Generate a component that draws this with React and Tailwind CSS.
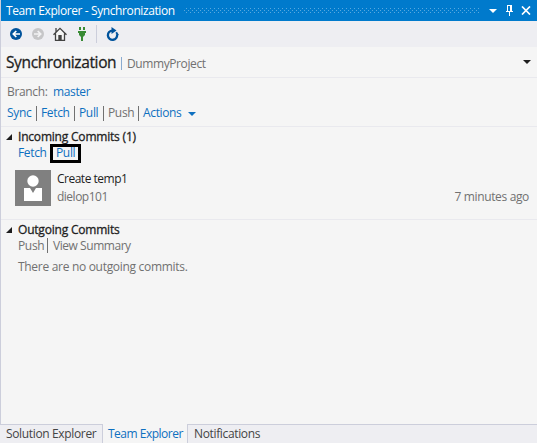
import React from "react";

const Sep = ({ className = "" }) => <span className={`h-[15px] w-px shrink-0 bg-[#717171] ${className}`} />;

const Label = ({ className = "", children }) => (
  <span className={`shrink-0 whitespace-nowrap ${className}`}>{children}</span>
);

const Expander = () => (
  <svg width="6" height="6" viewBox="0 0 6 6" className="ml-[5px] mr-[6px] shrink-0">
    <path d="M6 0V6H0Z" fill="#1e1e1e" />
  </svg>
);

function TitleBar() {
  return (
    <div className="flex h-[21px] items-center bg-[#007acc] pl-[5px] text-white">
      <Label className="w-[172px] tracking-[-0.4px]">Team Explorer - Synchronization</Label>
      <svg width="301" height="5" className="shrink-0">
        <defs>
          <pattern id="grip" width="4" height="4" patternUnits="userSpaceOnUse">
            <path d="M0 0h1v1H0zM2 2h1v1H2z" fill="#59a8de" />
          </pattern>
        </defs>
        <rect x="5" width="296" height="5" fill="url(#grip)" />
      </svg>
      <svg width="8" height="4" viewBox="0 0 8 4" className="ml-[10px] shrink-0">
        <path d="M0 0H8L4 4Z" fill="#fff" />
      </svg>
      <svg width="7" height="11" viewBox="0 0 7 11" className="ml-[9px] shrink-0">
        <path d="M1 0H6V6H7V7H4V11H3V7H0V6H1ZM2 1V6H4V1Z" fill="#fff" fillRule="evenodd" />
      </svg>
      <svg width="10" height="9" viewBox="0 0 10 9" className="ml-[8px] shrink-0">
        <path d="M1 .5L9 8.5M9 .5L1 8.5" stroke="#fff" strokeWidth="1.7" />
      </svg>
    </div>
  );
}

function Toolbar() {
  return (
    <div className="flex h-[26px] items-center bg-[#eeeef2] pl-[9px]">
      <svg width="12" height="12" viewBox="0 0 12 12" className="shrink-0">
        <circle cx="6" cy="6" r="6" fill="#00539c" />
        <path d="M10 6H3.5M6.3 3L3.3 6L6.3 9" fill="none" stroke="#fff" strokeWidth="1.7" />
      </svg>
      <svg width="12" height="12" viewBox="0 0 12 12" className="ml-[10px] shrink-0">
        <circle cx="6" cy="6" r="6" fill="#c6c6c8" />
        <path d="M2 6H8.5M5.7 3L8.7 6L5.7 9" fill="none" stroke="#f2f2f4" strokeWidth="1.7" />
      </svg>
      <svg width="14" height="14" viewBox="0 0 14 14" className="ml-[9px] shrink-0">
        <path d="M2.5 6.5V13.4H11.5V6.5L7 2Z" fill="#f5f5f5" />
        <path d="M.5 7.8L7 1.3L13.5 7.8M2.5 6.5V13.4H11.5V6.5M3 5V1" fill="none" stroke="#424242" strokeWidth="1.3" />
        <path d="M5.3 8H8.7V14H5.3Z" fill="#424242" />
      </svg>
      <svg width="8" height="14" viewBox="0 0 8 14" className="ml-[11px] shrink-0">
        <path d="M1 0H3V3H1ZM5 0H7V3H5ZM0 4H8V6H7V8L5 10V14H3V10L1 8V6H0Z" fill="#388a34" />
      </svg>
      <span className="ml-[10px] h-[18px] w-px bg-[#ccceDB]" />
      <svg width="14" height="14" viewBox="0 0 14 14" className="ml-[9px] shrink-0">
        <path d="M6.5 3.6A4.6 4.6 0 1 0 11 7.2" fill="none" stroke="#00539c" strokeWidth="2.3" />
        <path d="M10.2 5.2L12 8.2" fill="none" stroke="#00539c" strokeWidth="1.8" />
        <path d="M5.5 0L10.5 3.5L5.5 7Z" fill="#00539c" />
      </svg>
    </div>
  );
}

function Header() {
  return (
    <div className="flex h-[31px] items-center border-b border-[#e9e9ee] pl-[5px] text-[#717171]">
      <Label className="w-[115px] text-[15.5px] tracking-[-0.38px] text-[#1e1e1e] [-webkit-text-stroke:0.3px]">
        Synchronization
      </Label>
      <span className="mt-[2px] h-[13px] w-px bg-[#8aabd0]" />
      <Label className="ml-[5px] pt-[3px] tracking-[-0.4px]">DummyProject</Label>
      <svg width="8" height="4" viewBox="0 0 8 4" className="mb-px ml-auto mr-[6px]">
        <path d="M0 0H8L4 4Z" fill="#1e1e1e" />
      </svg>
    </div>
  );
}

function Incoming() {
  return (
    <section className="h-[93px] border-b border-[#e9e9ee]">
      <div className="flex h-[17px] items-center pt-[3px]">
        <Expander />
        <Label className="tracking-[-0.2px] text-[#1e1e1e] [-webkit-text-stroke:0.3px]">Incoming Commits (1)</Label>
      </div>
      <div className="flex h-[19px] items-center pl-[17px] text-[#0e70c0]">
        <Label className="w-[32px] pb-px">Fetch</Label>
        <span className="flex h-[19px] w-[31px] items-center border-[3px] border-black pb-px pl-[3px]">Pull</span>
      </div>
      <div className="mt-[7px] flex pl-[14px]">
        <svg width="36" height="36" viewBox="0 0 36 36" className="shrink-0">
          <path d="M0 0H36V36H0Z" fill="#808080" />
          <path d="M9 18H15L18 23L21 18H27V31H9Z" fill="#fff" />
          <circle cx="18" cy="11" r="5.7" fill="#fff" />
        </svg>
        <div className="ml-[6px] flex flex-1 flex-col text-[#717171]">
          <span className="h-[18px] leading-[18px] tracking-[-0.5px] text-[#1e1e1e]">Create temp1</span>
          <div className="flex h-[18px] justify-between pr-[8px] leading-[18px]">
            <span className="tracking-[-0.5px]">dielop101</span>
            <span>7 minutes ago</span>
          </div>
        </div>
      </div>
    </section>
  );
}

function Outgoing() {
  return (
    <section className="flex-1 text-[#717171]">
      <div className="flex h-[17px] items-center pt-[3px]">
        <Expander />
        <Label className="tracking-[-0.2px] text-[#1e1e1e] [-webkit-text-stroke:0.3px]">Outgoing Commits</Label>
      </div>
      <div className="flex h-[17px] items-center pl-[17px]">
        <Label className="w-[29px]">Push</Label>
        <Sep />
        <Label className="ml-[5px] tracking-[-0.45px]">View Summary</Label>
      </div>
      <div className="flex h-[26px] items-center pl-[17px]">
        <Label className="tracking-[-0.3px]">There are no outgoing commits.</Label>
      </div>
    </section>
  );
}

export default function App() {
  return (
    <div className="flex h-[443px] w-[537px] flex-col overflow-hidden bg-[#eeeef2] font-['Open_Sans','Noto_Sans',sans-serif] text-[12px] leading-[16px] tracking-[-0.35px]">
      <main className="flex h-[424px] flex-col border-l border-[#ccceDB] bg-[#f5f5f5]">
        <TitleBar />
        <Toolbar />
        <Header />
        <div className="h-[49px] border-b border-[#e9e9ee] pt-[4px] text-[#0e70c0]">
          <div className="flex h-[20px] items-center pl-[6px]">
            <Label className="w-[46px] text-[#717171]">Branch:</Label>
            <Label>master</Label>
          </div>
          <div className="flex h-[22px] items-center pl-[6px]">
            <Label className="w-[29px]">Sync</Label>
            <Sep />
            <Label className="ml-[4px] w-[33px]">Fetch</Label>
            <Sep />
            <Label className="ml-[4px] w-[24px]">Pull</Label>
            <Sep />
            <Label className="ml-[4px] w-[30px] text-[#717171]">Push</Label>
            <Sep />
            <Label className="ml-[4px] w-[45px]">Actions</Label>
            <svg width="8" height="4" viewBox="0 0 8 4" className="mt-px">
              <path d="M0 0H8L4 4Z" fill="#0e70c0" />
            </svg>
          </div>
        </div>
        <Incoming />
        <Outgoing />
      </main>
      <nav className="flex h-[19px] text-[#444444]">
        <span className="flex w-[103px] items-center border-r border-t border-[#ccceDB] pl-[6px]">Solution Explorer</span>
        <span className="flex w-[84px] items-center whitespace-nowrap bg-[#f5f5f5] pl-[5px] pt-px tracking-[-0.5px] text-[#0e70c0]">
          Team Explorer
        </span>
        <span className="flex flex-1 items-center border-l border-t border-[#ccceDB] pl-[6px]">Notifications</span>
      </nav>
    </div>
  );
}
